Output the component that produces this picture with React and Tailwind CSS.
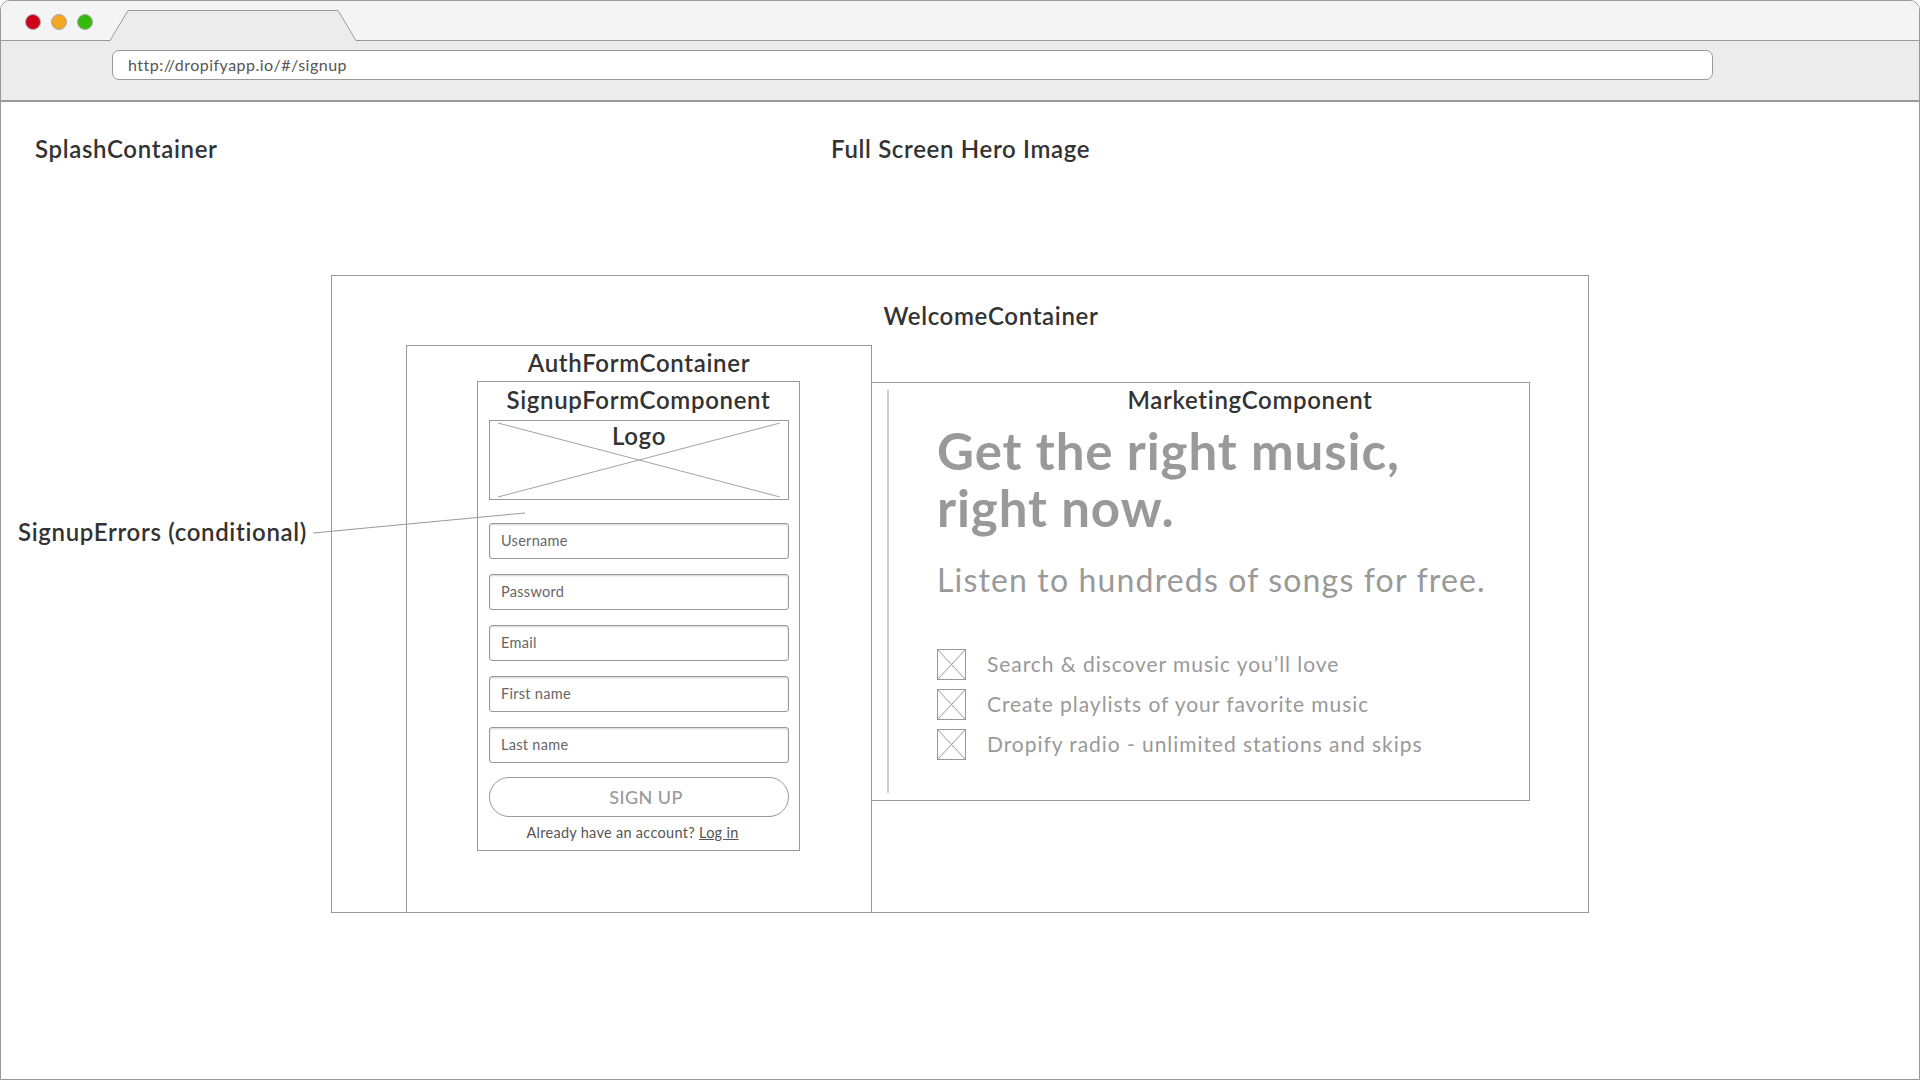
import React from 'react';

const FONT = { fontFamily: 'Lato, "Open Sans", sans-serif' };

function TrafficLights() {
  return (
    <div className="flex gap-[10px] pl-[24px] pt-[13px] self-start">
      <span className="w-[16px] h-[16px] rounded-full bg-[#d0021b] border border-[#a8a8a8]" />
      <span className="w-[16px] h-[16px] rounded-full bg-[#f5a623] border border-[#a8a8a8]" />
      <span className="w-[16px] h-[16px] rounded-full bg-[#37b80f] border border-[#a8a8a8]" />
    </div>
  );
}

function Tab() {
  return (
    <svg width="248" height="31" viewBox="0 0 248 31" className="self-end mb-[-1px] ml-[17px] relative">
      <path d="M0 31 L18 0.5 L228 0.5 L246 31 Z" fill="#ececec" />
      <path d="M0 30.5 L18 0.5 L228 0.5 L246 30.5" fill="none" stroke="#999" strokeWidth="1" />
    </svg>
  );
}

function Field({ label }) {
  return (
    <div className="h-[36px] w-[300px] rounded-[3px] border border-[#999] shadow-[inset_0_1px_2px_rgba(0,0,0,0.18)] flex items-center pl-[11px] text-[14.5px] tracking-[0.02em] text-[#666]">
      {label}
    </div>
  );
}

function XBox({ className }) {
  return (
    <svg className={className} viewBox="0 0 29 31" preserveAspectRatio="none">
      <rect x="0.5" y="0.5" width="28" height="30" fill="none" stroke="#999" />
      <line x1="0.5" y1="0.5" x2="28.5" y2="30.5" stroke="#999" />
      <line x1="28.5" y1="0.5" x2="0.5" y2="30.5" stroke="#999" />
    </svg>
  );
}

const features = [
  'Search & discover music you\u2019ll love',
  'Create playlists of your favorite music',
  'Dropify radio - unlimited stations and skips',
];

export default function App() {
  return (
    <div style={FONT} className="w-[1920px] h-[1080px] bg-white border border-[#999] rounded-t-[10px] overflow-hidden relative flex flex-col">
      {/* tab bar */}
      <div className="h-[40px] bg-[#f4f4f4] border-b border-[#999] flex shrink-0">
        <TrafficLights />
        <Tab />
      </div>

      {/* toolbar */}
      <div className="h-[61px] bg-[#ececec] border-b-2 border-[#999] pt-[9px] pl-[111px] shrink-0">
        <div className="w-[1601px] h-[30px] bg-white border border-[#999] rounded-[7px] flex items-center pl-[15px] text-[16px] tracking-[0.03em] text-[#555]">
          http://dropifyapp.io/#/signup
        </div>
      </div>

      {/* page */}
      <div className="flex-1 relative">
        <div className="flex pt-[31px] pl-[34px] text-[24px] leading-[32px] font-semibold tracking-[0.028em] text-[#333]">
          <div className="w-[796px]">SplashContainer</div>
          <div>Full Screen Hero Image</div>
        </div>

        <div className="ml-[330px] mt-[110px] w-[1258px] h-[638px] border border-[#999]">
          <div className="pt-[24px] pl-[62px] flex justify-center text-[24px] leading-[32px] font-semibold tracking-[0.028em] text-[#333]">
            WelcomeContainer
          </div>

          <div className="flex items-start mt-[13px] ml-[74px]">
            {/* AuthFormContainer */}
            <div className="w-[466px] h-[568px] border border-[#999] shrink-0">
              <div className="pt-[3px] text-center text-[24px] leading-[28px] font-semibold tracking-[0.028em] text-[#333]">
                AuthFormContainer
              </div>
              <div className="mt-[4px] ml-[70px] w-[323px] h-[470px] border border-[#999]">
                <div className="pt-[4px] text-center text-[24px] leading-[28px] font-semibold tracking-[0.028em] text-[#333]">
                  SignupFormComponent
                </div>
                <div className="mt-[6px] ml-[11px] w-[300px] h-[80px] border border-[#999] relative">
                  <svg className="absolute inset-0" width="298" height="78" viewBox="0 0 298 78">
                    <line x1="8" y1="2" x2="290" y2="76" stroke="#a3a3a3" />
                    <line x1="290" y1="2" x2="8" y2="76" stroke="#a3a3a3" />
                  </svg>
                  <div className="relative pt-[1px] text-center text-[24px] leading-[28px] font-semibold tracking-[0.028em] text-[#333]">
                    Logo
                  </div>
                </div>
                <div className="mt-[23px] ml-[11px] flex flex-col gap-[15px]">
                  <Field label="Username" />
                  <Field label="Password" />
                  <Field label="Email" />
                  <Field label="First name" />
                  <Field label="Last name" />
                </div>
                <div className="mt-[14px] ml-[11px] w-[300px] h-[40px] rounded-full border border-[#999] flex items-center justify-center pl-[14px] text-[18px] font-medium tracking-wide text-[#999]">
                  SIGN UP
                </div>
                <div className="mt-[6px] pr-[12px] text-center text-[14.5px] leading-[20px] tracking-[0.02em] text-[#555]">
                  Already have an account? <span className="underline">Log in</span>
                </div>
              </div>
            </div>

            {/* MarketingComponent */}
            <div className="mt-[37px] -ml-px w-[659px] h-[419px] border border-[#999] flex">
              <div className="ml-[15px] my-[7px] w-[2px] bg-[#cfcfcf] shrink-0" />
              <div className="flex-1">
                <div className="pt-[3px] pl-[82px] text-center text-[24px] leading-[28px] font-semibold tracking-[0.028em] text-[#333]">
                  MarketingComponent
                </div>
                <div className="pl-[48px] mt-[8px] text-[51px] leading-[57px] font-bold tracking-[0.018em] text-[#999]">
                  Get the right music,
                  <br />
                  right now.
                </div>
                <div className="pl-[48px] mt-[26px] text-[32px] leading-[36px] tracking-[0.036em] text-[#999]">
                  Listen to hundreds of songs for free.
                </div>
                <div className="pl-[48px] mt-[50px] flex flex-col gap-[8px]">
                  {features.map((f) => (
                    <div key={f} className="h-[32px] flex items-center gap-[21px]">
                      <XBox className="w-[29px] h-[31px] shrink-0" />
                      <span className="text-[21px] tracking-[0.045em] text-[#999]">{f}</span>
                    </div>
                  ))}
                </div>
              </div>
            </div>
          </div>
        </div>

        {/* annotation */}
        <div className="absolute left-[17px] top-[414px] text-[24px] leading-[32px] font-semibold tracking-[0.028em] text-[#333]">
          SignupErrors (conditional)
        </div>
        <svg className="absolute left-0 top-0 pointer-events-none" width="1918" height="976">
          <line x1="312" y1="431" x2="524" y2="411" stroke="#999" />
        </svg>
      </div>
    </div>
  );
}
